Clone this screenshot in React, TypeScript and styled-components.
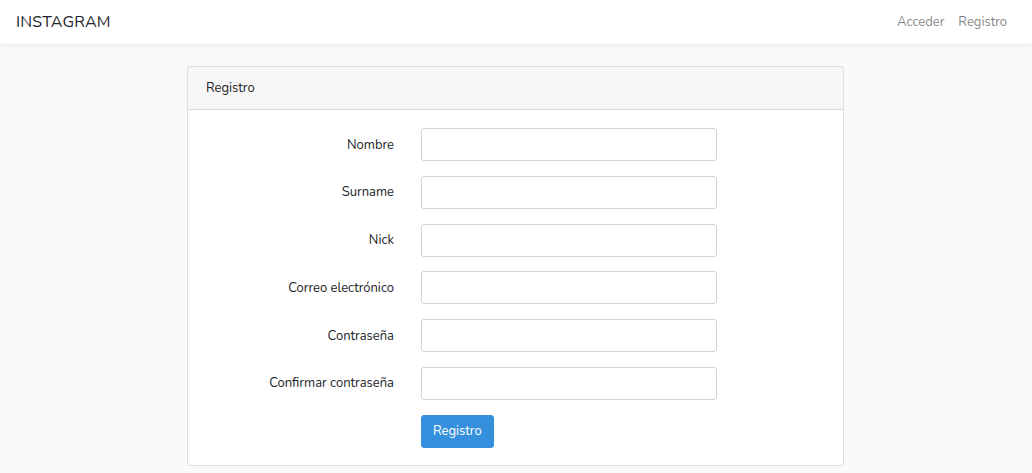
import styled, { createGlobalStyle } from 'styled-components'

const GlobalStyle = createGlobalStyle`
  html, body {
    margin: 0;
    padding: 0;
    background-color: #f8fafc;
    font-family: Nunito, Lato, "Open Sans", sans-serif;
    font-size: 13px;
    color: #212529;
  }
`

const Navbar = styled.nav`
  height: 44px;
  background-color: #fff;
  box-shadow: 0 2px 4px rgba(0, 0, 0, 0.06);
  display: flex;
  align-items: center;
  justify-content: space-between;
  padding: 0 25px 0 16px;
`

const Brand = styled.a`
  font-size: 16px;
  letter-spacing: 0.2px;
  color: #212529;
  text-decoration: none;
`

const NavLinks = styled.div`
  display: flex;
  gap: 14px;
`

const NavLink = styled.a`
  color: rgba(0, 0, 0, 0.5);
  text-decoration: none;
  font-size: 13px;
`

const Main = styled.main`
  padding: 22px 1px 0 0;
  display: flex;
  justify-content: center;
`

const Card = styled.div`
  width: 657px;
  box-sizing: border-box;
  background: #fff;
  border: 1px solid rgba(0, 0, 0, 0.125);
  border-radius: 3px;
`

const CardHeader = styled.div`
  height: 42px;
  display: flex;
  align-items: center;
  padding: 0 18px;
  background-color: rgba(0, 0, 0, 0.03);
  border-bottom: 1px solid rgba(0, 0, 0, 0.125);
`

const CardBody = styled.form`
  padding: 18px 0 17px;
  display: grid;
  grid-template-columns: 206px 296px;
  column-gap: 27px;
  row-gap: 14.8px;
  align-items: center;
`

const Label = styled.label`
  text-align: right;
`

const Input = styled.input`
  height: 33px;
  box-sizing: border-box;
  border: 1px solid #ced4da;
  border-radius: 3px;
  background: #fff;
  font: inherit;
  padding: 0 10px;
`

const Button = styled.button`
  grid-column: 2;
  justify-self: start;
  height: 33px;
  padding: 0 11px;
  border: 1px solid #3490dc;
  border-radius: 3px;
  background-color: #3490dc;
  color: #fff;
  font: inherit;
  cursor: pointer;
`

const fields = [
  { id: 'name', label: 'Nombre', type: 'text' },
  { id: 'surname', label: 'Surname', type: 'text' },
  { id: 'nick', label: 'Nick', type: 'text' },
  { id: 'email', label: 'Correo electrónico', type: 'email' },
  { id: 'password', label: 'Contraseña', type: 'password' },
  { id: 'password-confirm', label: 'Confirmar contraseña', type: 'password' },
]

const App = () => {
  return (
    <>
      <GlobalStyle />
      <Navbar>
        <Brand href="#">INSTAGRAM</Brand>
        <NavLinks>
          <NavLink href="#">Acceder</NavLink>
          <NavLink href="#">Registro</NavLink>
        </NavLinks>
      </Navbar>
      <Main>
        <Card>
          <CardHeader>Registro</CardHeader>
          <CardBody onSubmit={(e) => e.preventDefault()}>
            {fields.map((f) => [
              <Label key={f.id + '-l'} htmlFor={f.id}>{f.label}</Label>,
              <Input key={f.id} id={f.id} type={f.type} />,
            ])}
            <Button type="submit">Registro</Button>
          </CardBody>
        </Card>
      </Main>
    </>
  )
}

export default App
